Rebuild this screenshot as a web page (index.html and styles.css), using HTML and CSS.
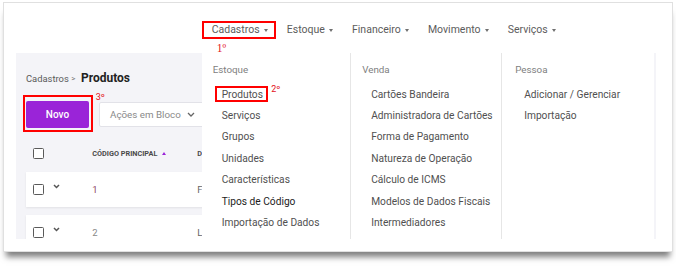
FILE: index.html
```html
<!DOCTYPE html>
<html lang="pt-BR">
<head>
<meta charset="utf-8">
<title>Cadastros &gt; Produtos</title>
<link rel="stylesheet" href="styles.css">
</head>
<body>
<div class="frame">
  <header class="topbar">
    <nav class="nav">
      <span class="nav-item marked">Cadastros<i class="caret"></i><span class="note note-1">1º</span></span>
      <span class="nav-item">Estoque<i class="caret"></i></span>
      <span class="nav-item">Financeiro<i class="caret"></i></span>
      <span class="nav-item">Movimento<i class="caret"></i></span>
      <span class="nav-item">Serviços<i class="caret"></i></span>
    </nav>
  </header>

  <main class="panel">
    <div class="crumb"><span>Cadastros</span><span class="sep">&gt;</span><strong>Produtos</strong></div>
    <div class="actions">
      <div class="btn-wrap">
        <button class="btn-primary">Novo</button>
        <span class="note note-3">3º</span>
      </div>
      <div class="select">
        <span>Ações em Bloco</span>
        <svg class="chev" width="8" height="5" viewBox="0 0 8 5"><polyline points="1,1 4,4 7,1" fill="none" stroke="#666" stroke-width="1.3"/></svg>
      </div>
    </div>

    <div class="grid thead">
      <span class="chk"></span>
      <span></span>
      <span class="th">Código Principal<i class="sort"></i></span>
      <span class="th clip">D</span>
    </div>

    <div class="grid row">
      <span class="chk"></span>
      <svg class="expand" width="7" height="5" viewBox="0 0 7 5"><polyline points="1,1 3.5,3.5 6,1" fill="none" stroke="#555" stroke-width="1.5"/></svg>
      <span class="cell code">1</span>
      <span class="cell clip">F</span>
    </div>
    <div class="grid row">
      <span class="chk"></span>
      <svg class="expand" width="7" height="5" viewBox="0 0 7 5"><polyline points="1,1 3.5,3.5 6,1" fill="none" stroke="#555" stroke-width="1.5"/></svg>
      <span class="cell code code-2">2</span>
      <span class="cell clip">L</span>
    </div>
  </main>

  <div class="menu">
    <div class="col">
      <div class="col-title">Estoque</div>
      <ul>
        <li><span class="item-marked">Produtos<span class="note note-2">2º</span></span></li>
        <li>Serviços</li>
        <li>Grupos</li>
        <li>Unidades</li>
        <li>Características</li>
        <li class="active">Tipos de Código</li>
        <li>Importação de Dados</li>
      </ul>
    </div>
    <div class="col">
      <div class="col-title">Venda</div>
      <ul>
        <li>Cartões Bandeira</li>
        <li>Administradora de Cartões</li>
        <li>Forma de Pagamento</li>
        <li>Natureza de Operação</li>
        <li>Cálculo de ICMS</li>
        <li>Modelos de Dados Fiscais</li>
        <li>Intermediadores</li>
      </ul>
    </div>
    <div class="col col-last">
      <div class="col-title">Pessoa</div>
      <ul>
        <li>Adicionar / Gerenciar</li>
        <li>Importação</li>
      </ul>
    </div>
  </div>
</div>
</body>
</html>
```

FILE: styles.css
```css
html, body {
  margin: 0;
  padding: 0;
  background: #fff;
}
body {
  width: 676px;
  height: 272px;
  overflow: hidden;
  font-family: Roboto, "Noto Sans", "Liberation Sans", sans-serif;
}

.frame {
  position: relative;
  box-sizing: border-box;
  width: 670px;
  height: 250px;
  margin: 2px 0 0 3px;
  border: 1px solid #e0e0e0;
  background: #fff;
  box-shadow: 0 8px 6px -3px rgba(0, 0, 0, 0.5);
}

/* top navigation */
.topbar {
  height: 50px;
  box-sizing: border-box;
  padding: 19.5px 0 0 207.7px;
}
.nav {
  display: flex;
  gap: 19.2px;
}
.nav-item {
  position: relative;
  display: flex;
  align-items: center;
  font-size: 10.5px;
  line-height: 14px;
  color: #5c5c5c;
}
.caret {
  width: 0;
  height: 0;
  margin: 1px 0 0 4px;
  border-left: 2.5px solid transparent;
  border-right: 2.5px solid transparent;
  border-top: 3px solid #707070;
}
.marked::after {
  content: "";
  position: absolute;
  left: -10px;
  right: -8.5px;
  top: -1.5px;
  bottom: -2.5px;
  border: 2px solid #f00;
}

/* annotations */
.note {
  position: absolute;
  color: #e3121b;
  font-size: 9px;
  line-height: 10px;
  white-space: nowrap;
}
.note-1 {
  font-family: "Liberation Serif", "DejaVu Serif", serif;
  font-size: 11.5px;
  line-height: 12px;
  left: 5px;
  top: 19.5px;
}
.note-2 {
  left: 49.5px;
  top: -5px;
}
.note-3 {
  left: 69.7px;
  top: -9.3px;
}

/* page panel */
.panel {
  height: 186px;
  margin: 0 16px 0 12px;
  box-sizing: border-box;
  padding: 18px 6px 0 10px;
  background: #f4f4f8;
  overflow: hidden;
}
.crumb {
  display: flex;
  align-items: center;
  height: 14px;
  font-size: 9.4px;
  color: #5a5a5a;
}
.crumb .sep {
  margin: 0 5.5px 0 2.5px;
  font-size: 8px;
  color: #777;
}
.crumb strong {
  font-size: 12px;
  font-weight: 700;
  color: #222;
}

.actions {
  display: flex;
  align-items: center;
  gap: 10px;
  margin-top: 16px;
}
.btn-wrap {
  position: relative;
}
.btn-wrap::after {
  content: "";
  position: absolute;
  left: -2.7px;
  right: -4.3px;
  top: -6.4px;
  bottom: -4px;
  border: 2px solid #f00;
}
.btn-primary {
  display: block;
  width: 63px;
  height: 27px;
  padding: 0;
  border: 0;
  border-radius: 2px;
  background: #9a24d8;
  color: #fff;
  font-family: Roboto, "Noto Sans", sans-serif;
  font-size: 10px;
  font-weight: 500;
}
.select {
  display: flex;
  align-items: center;
  gap: 6px;
  width: 130px;
  height: 25px;
  box-sizing: border-box;
  padding: 0 10px;
  border: 1px solid #e2e2e8;
  border-radius: 2px;
  background: #fff;
  font-size: 9.8px;
  color: #8a8a8a;
}

/* table */
.grid {
  display: grid;
  grid-template-columns: 20px 39px 105px 1fr;
  align-items: center;
  padding-left: 7.3px;
}
.thead {
  height: 24px;
  margin-top: 13px;
}
.th {
  display: flex;
  align-items: center;
  font-size: 7.3px;
  font-weight: 700;
  color: #4a4a4a;
  text-transform: uppercase;
  white-space: nowrap;
}
.sort {
  width: 0;
  height: 0;
  margin-left: 5px;
  border-left: 2.5px solid transparent;
  border-right: 2.5px solid transparent;
  border-bottom: 3.5px solid #9a24d8;
}
.clip {
  overflow: hidden;
}
.chk {
  width: 11px;
  height: 11px;
  box-sizing: border-box;
  border: 1.5px solid #5a5a5a;
  border-radius: 1.5px;
  background: #fff;
}
.row {
  height: 34.4px;
  margin-top: 7.3px;
  background: #fff;
  box-shadow: 0 1px 2px rgba(0, 0, 0, 0.08);
}
.row + .row {
  margin-top: 8.3px;
}
.expand {
  margin-bottom: 5px;
}
.cell {
  font-size: 9.5px;
  color: #666;
  white-space: nowrap;
}
.code {
  color: #8e4466;
}
.code-2 {
  color: #888;
}

/* dropdown menu */
.menu {
  position: absolute;
  left: 197.7px;
  top: 50px;
  width: 452px;
  height: 186px;
  display: grid;
  grid-template-columns: 149.5px 151px 1fr;
  background: #fff;
}
.col {
  box-sizing: border-box;
  padding: 10px 0 0 11px;
  border-right: 1px solid #e6e6e6;
}
.col-last {
  border-right: 0;
  padding-left: 13px;
}
.col-title {
  font-size: 9.8px;
  line-height: 14px;
  color: #808080;
}
.col ul {
  list-style: none;
  margin: 6.6px 0 0;
  padding: 0 0 0 9px;
}
.col li {
  height: 21.4px;
  line-height: 21.4px;
  font-size: 10.2px;
  color: #505050;
  white-space: nowrap;
}
.col li.active {
  color: #1c1c1c;
}
.item-marked {
  position: relative;
  display: inline-block;
  line-height: 12px;
}
.item-marked::after {
  content: "";
  position: absolute;
  left: -6.4px;
  right: -5px;
  top: -3px;
  bottom: -1.4px;
  border: 2px solid #f00;
}
```
